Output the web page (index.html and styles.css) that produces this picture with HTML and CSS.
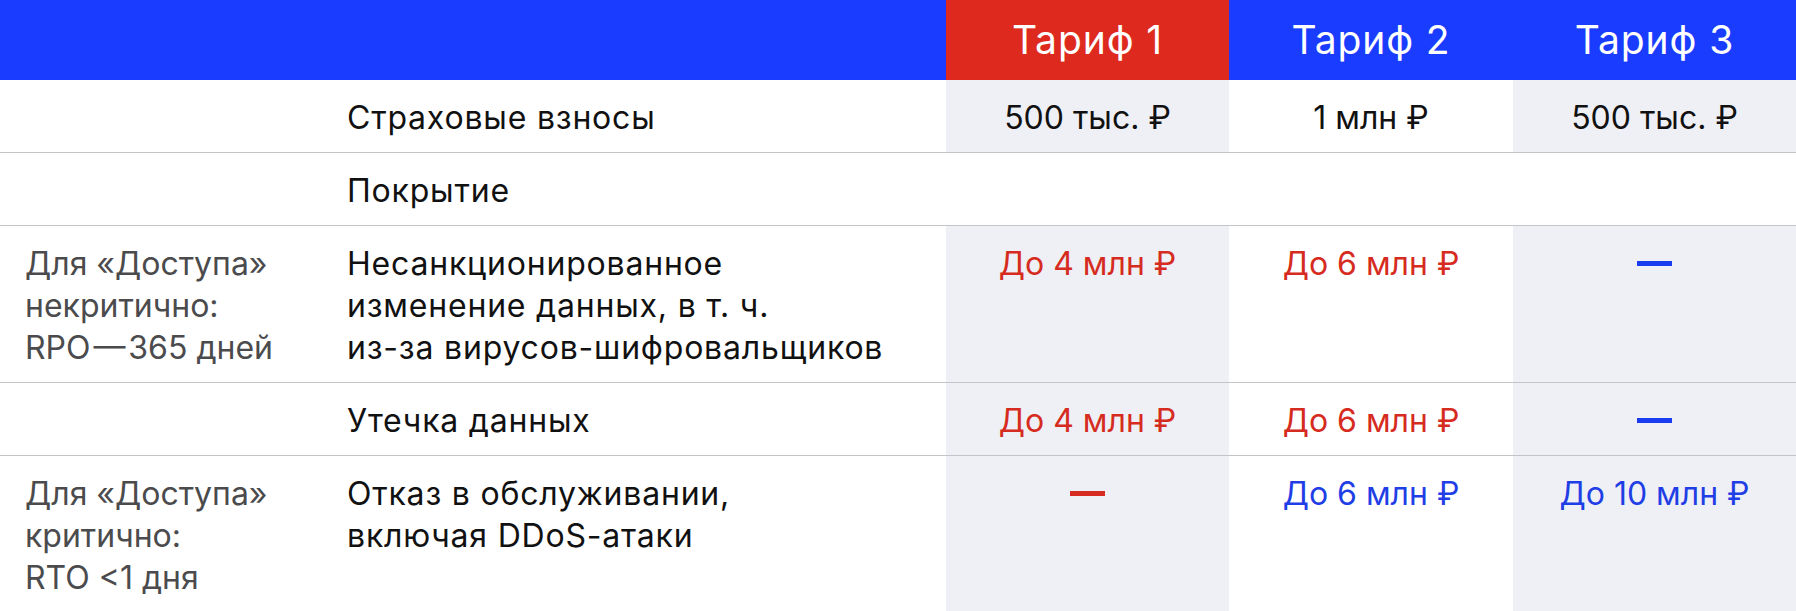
FILE: index.html
```html
<!DOCTYPE html>
<html lang="ru">
<head>
<meta charset="utf-8">
<title>Тарифы</title>
<link rel="stylesheet" href="styles.css">
</head>
<body>
<div class="table">
  <div class="row head">
    <div class="cell"></div>
    <div class="cell"></div>
    <div class="cell tariff red-bg">Тариф 1</div>
    <div class="cell tariff">Тариф 2</div>
    <div class="cell tariff">Тариф 3</div>
  </div>
  <div class="row">
    <div class="cell note"></div>
    <div class="cell name">Страховые взносы</div>
    <div class="cell val shade">500 тыс. ₽</div>
    <div class="cell val">1 млн ₽</div>
    <div class="cell val shade">500 тыс. ₽</div>
  </div>
  <div class="row">
    <div class="cell note"></div>
    <div class="cell name">Покрытие</div>
    <div class="cell val"></div>
    <div class="cell val"></div>
    <div class="cell val"></div>
  </div>
  <div class="row">
    <div class="cell note">Для «Доступа»<br>некритично:<br>RPO&#8202;—&#8202;365 дней</div>
    <div class="cell name">Несанкционированное<br>изменение данных, в т. ч.<br>из-за вирусов-шифровальщиков</div>
    <div class="cell val shade red">До 4 млн ₽</div>
    <div class="cell val red">До 6 млн ₽</div>
    <div class="cell val shade"><span class="dash blue-dash"></span></div>
  </div>
  <div class="row">
    <div class="cell note"></div>
    <div class="cell name">Утечка данных</div>
    <div class="cell val shade red">До 4 млн ₽</div>
    <div class="cell val red">До 6 млн ₽</div>
    <div class="cell val shade"><span class="dash blue-dash"></span></div>
  </div>
  <div class="row">
    <div class="cell note">Для «Доступа»<br>критично:<br>RTO &lt;1 дня</div>
    <div class="cell name">Отказ в обслуживании,<br>включая DDoS-атаки</div>
    <div class="cell val shade"><span class="dash red-dash"></span></div>
    <div class="cell val blue">До 6 млн ₽</div>
    <div class="cell val shade blue">До 10 млн ₽</div>
  </div>
</div>
</body>
</html>
```

FILE: styles.css
```css
* {
  box-sizing: border-box;
}

html, body {
  margin: 0;
  padding: 0;
  background: #ffffff;
}

body {
  font-family: Inter, Roboto, "Liberation Sans", sans-serif;
  color: #111111;
  width: 1796px;
}

.table {
  display: flex;
  flex-direction: column;
}

.row {
  display: grid;
  grid-template-columns: 347px 599px 283px 284px 283px;
  border-bottom: 1px solid #c3c4c8;
  font-size: 32px;
  line-height: 42px;
  letter-spacing: 0.8px;
}

.row.head {
  height: 80px;
  background: #1a3cff;
  border-bottom: none;
}

.cell {
  padding: 17px 0 13px;
}

.head .cell {
  padding: 0;
}

.tariff {
  display: flex;
  align-items: center;
  justify-content: center;
  color: #ffffff;
  font-size: 39px;
  letter-spacing: 0.9px;
  padding-bottom: 3px;
}

.red-bg {
  background: #de291e;
}

.note {
  padding-left: 25px;
  color: #4b4b4d;
  letter-spacing: 0;
}

.name {
  color: #111111;
}

.val {
  text-align: center;
  color: #111111;
  letter-spacing: 0;
}

.shade {
  background: #eff0f5;
}

.red {
  color: #d62b20;
}

.blue {
  color: #1f3ee6;
}

.dash {
  display: inline-block;
  width: 35px;
  height: 5px;
  vertical-align: 9px;
}

.blue-dash {
  background: #1a3cf0;
}

.red-dash {
  background: #d62b20;
}
```
